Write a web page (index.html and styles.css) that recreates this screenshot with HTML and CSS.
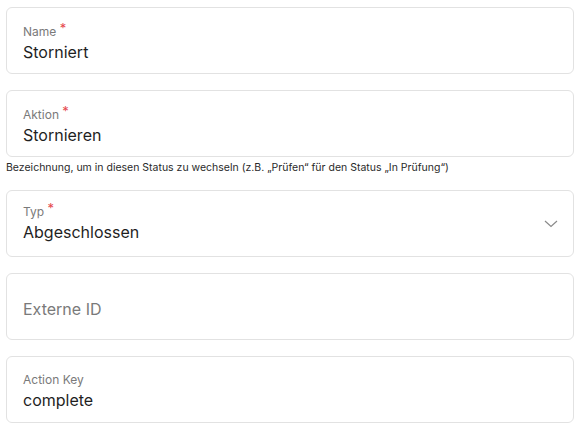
FILE: index.html
```html
<!DOCTYPE html>
<html lang="de">
<head>
<meta charset="utf-8">
<link rel="stylesheet" href="styles.css">
</head>
<body>
<form class="form">
  <div class="field">
    <div class="label">Name <span class="req">*</span></div>
    <div class="value">Storniert</div>
  </div>
  <div class="group">
    <div class="field">
      <div class="label">Aktion <span class="req">*</span></div>
      <div class="value">Stornieren</div>
    </div>
    <div class="helper">Bezeichnung, um in diesen Status zu wechseln (z.B. „Prüfen“ für den Status „In Prüfung“)</div>
  </div>
  <div class="field select">
    <div class="select-text">
      <div class="label">Typ <span class="req">*</span></div>
      <div class="value">Abgeschlossen</div>
    </div>
    <svg class="chevron" width="14" height="8" viewBox="0 0 14 8"><path d="M1 1l6 5.5L13 1" fill="none" stroke="#8a8a8a" stroke-width="1.2"/></svg>
  </div>
  <div class="field empty">
    <div class="placeholder">Externe ID</div>
  </div>
  <div class="field">
    <div class="label">Action Key</div>
    <div class="value">complete</div>
  </div>
</form>
</body>
</html>
```
FILE: styles.css
```css
* { box-sizing: border-box; }
html, body { margin: 0; padding: 0; background: #fff; }
body {
  font-family: Inter, "Noto Sans", sans-serif;
  color: #1f1f1f;
}
.form {
  display: flex;
  flex-direction: column;
  gap: 16px;
  padding: 7px 6px 0 6px;
  width: 580px;
}
.field {
  height: 67px;
  border: 1px solid #e2e2e2;
  border-radius: 6px;
  padding: 15px 16px 10px 16px;
}
.label {
  font-size: 12px;
  line-height: 16px;
  color: #7a7a7a;
}
.req {
  color: #e5484d;
  font-size: 13px;
  position: relative;
  top: -3px;
}
.value {
  font-size: 16px;
  line-height: 24px;
  color: #1f1f1f;
}
.helper {
  font-size: 10.5px;
  line-height: 12px;
  color: #2a2a2a;
  margin-top: 5px;
}
.select {
  display: flex;
  align-items: center;
  justify-content: space-between;
  padding: 0 15px 0 16px;
}
.select-text {
  align-self: flex-start;
  padding-top: 12px;
}
.empty {
  display: flex;
  align-items: center;
  padding-top: 4px;
  padding-bottom: 0;
}
.placeholder {
  font-size: 16px;
  color: #7a7a7a;
}
```
